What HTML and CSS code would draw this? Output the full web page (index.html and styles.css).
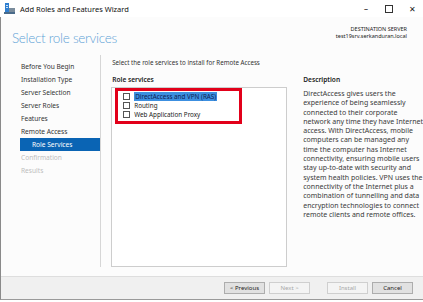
FILE: index.html
```html
<!DOCTYPE html>
<html lang="en">
<head>
    <meta charset="UTF-8">
    <title>Add Roles and Features Wizard</title>
    <link rel="stylesheet" href="styles.css">
</head>
<body>
    <div class="window">
        <div class="titlebar">
            <svg class="app-icon" width="11" height="11" viewBox="0 0 11 11">
                <rect x="1" y="0" width="4" height="9" fill="#2f7fd0"/>
                <rect x="2" y="2" width="2" height="1" fill="#cfe3f7"/>
                <rect x="2" y="4" width="2" height="1" fill="#cfe3f7"/>
                <rect x="5" y="5" width="6" height="5" fill="#7a8c9c"/>
                <rect x="0" y="9" width="11" height="2" fill="#4a6b8a"/>
            </svg>
            <span class="title-text">Add Roles and Features Wizard</span>
            <div class="controls">
                <span class="ctl">&#8211;</span>
                <span class="ctl max"></span>
                <span class="ctl">&#10005;</span>
            </div>
        </div>

        <div class="header">
            <h1>Select role services</h1>
            <div class="dest">
                <div>DESTINATION SERVER</div>
                <div>test19srv.serkanduran.local</div>
            </div>
        </div>

        <div class="main">
            <ul class="nav">
                <li>Before You Begin</li>
                <li>Installation Type</li>
                <li>Server Selection</li>
                <li>Server Roles</li>
                <li>Features</li>
                <li>Remote Access</li>
                <li class="active">Role Services</li>
                <li class="disabled">Confirmation</li>
                <li class="disabled">Results</li>
            </ul>

            <div class="content">
                <p class="intro">Select the role services to install for Remote Access</p>
                <div class="columns">
                    <div class="services">
                        <div class="col-title">Role services</div>
                        <div class="listbox">
                            <div class="mark">
                                <div class="item"><span class="box"></span><span class="sel">DirectAccess and VPN (RAS)</span></div>
                                <div class="item"><span class="box"></span><span>Routing</span></div>
                                <div class="item"><span class="box"></span><span>Web Application Proxy</span></div>
                            </div>
                        </div>
                    </div>
                    <div class="description">
                        <div class="col-title">Description</div>
                        <p>DirectAccess gives users the<br>
                        experience of being seamlessly<br>
                        connected to their corporate<br>
                        network any time they have Internet<br>
                        access. With DirectAccess, mobile<br>
                        computers can be managed any<br>
                        time the computer has Internet<br>
                        connectivity, ensuring mobile users<br>
                        stay up-to-date with security and<br>
                        system health policies. VPN uses the<br>
                        connectivity of the Internet plus a<br>
                        combination of tunnelling and data<br>
                        encryption technologies to connect<br>
                        remote clients and remote offices.</p>
                    </div>
                </div>
            </div>
        </div>

        <div class="footer">
            <button class="btn">&lt; Previous</button>
            <button class="btn" disabled>Next &gt;</button>
            <button class="btn install" disabled>Install</button>
            <button class="btn">Cancel</button>
        </div>
    </div>
</body>
</html>
```

FILE: styles.css
```css
body {
    margin: 0;
    background: #ffffff;
    font-family: "Noto Sans", "Open Sans", sans-serif;
    color: #333;
}
.window {
    width: 423px;
    height: 300px;
    box-sizing: border-box;
    border-left: 1px solid #8a8a8a;
    border-bottom: 1px solid #9a9a9a;
    background: #fcfcfc;
    display: flex;
    flex-direction: column;
}
.titlebar {
    height: 17px;
    background: #fff;
    display: flex;
    align-items: center;
    padding-left: 4px;
    margin-left: -1px;
}
.app-icon {
    margin-right: 5px;
}
.title-text {
    font-size: 7.5px;
    color: #111;
}
.controls {
    margin-left: auto;
    display: flex;
    align-items: center;
}
.ctl {
    width: 22px;
    text-align: center;
    font-size: 8px;
    color: #222;
}
.ctl.max {
    width: 6px;
    height: 6px;
    border: 1px solid #333;
    margin: 0 8px;
}
.header {
    height: 38px;
    display: flex;
    justify-content: space-between;
    align-items: flex-start;
    padding: 0 16px 0 11px;
}
.header h1 {
    margin: 13px 0 0;
    font-family: Lato, "Noto Sans", sans-serif;
    font-size: 13.5px;
    font-weight: 300;
    letter-spacing: -0.3px;
    color: #5ea2d6;
}
.dest {
    margin-top: 9px;
    text-align: right;
    font-size: 5.5px;
    line-height: 7px;
    color: #222;
}
.main {
    flex: 1;
    display: flex;
}
.nav {
    list-style: none;
    margin: 0 0 9px;
    padding: 5px 0 0;
    width: 103px;
    border-right: 1px solid #d6d6d6;
}
.nav li {
    height: 13px;
    line-height: 13px;
    padding-left: 20px;
    font-size: 6.6px;
    color: #333;
}
.nav li.active {
    margin-left: 19px;
    padding-left: 12px;
    background: #0a64b4;
    color: #fff;
}
.nav li.disabled {
    color: #bdbdbd;
}
.content {
    flex: 1;
    padding-left: 11px;
    display: flex;
    flex-direction: column;
}
.intro {
    margin: 3px 0 0;
    font-size: 6.2px;
    line-height: 9px;
}
.columns {
    flex: 1;
    display: flex;
    margin-top: 8px;
}
.services {
    width: 176px;
    display: flex;
    flex-direction: column;
    margin-left: -1px;
}
.col-title {
    font-size: 6.6px;
    font-weight: 600;
    line-height: 9px;
    color: #222;
}
.services .col-title {
    padding-left: 1px;
}
.listbox {
    height: 180px;
    margin-top: 3px;
    border: 1px solid #cdcdcd;
    background: #fff;
    box-sizing: border-box;
}
.mark {
    width: 127px;
    height: 36px;
    margin: 0 0 0 3px;
    border: 3px solid #e2001a;
    box-sizing: border-box;
    padding: 1px 0 0 5px;
}
.item {
    height: 9px;
    display: flex;
    align-items: center;
    font-size: 6.3px;
    color: #222;
}
.box {
    width: 7px;
    height: 7px;
    border: 1px solid #555;
    background: #fff;
    margin-right: 4px;
    box-sizing: border-box;
}
.sel {
    background: #3c8fe0;
    color: #0d2050;
    padding: 0 1px;
    line-height: 9px;
}
.description {
    margin-left: 16px;
    flex: 1;
}
.description p {
    margin: 5px 0 0;
    font-size: 7px;
    line-height: 9.3px;
    white-space: nowrap;
    color: #3a3a3a;
}
.footer {
    height: 22px;
    border-top: 1px solid #dedede;
    background: #f0f0f0;
    display: flex;
    align-items: center;
    justify-content: flex-end;
    padding-right: 10px;
}
.btn {
    width: 41px;
    height: 12px;
    margin-left: 4px;
    padding: 0;
    font-family: "Noto Sans", "Open Sans", sans-serif;
    font-size: 6px;
    color: #222;
    background: #e1e1e1;
    border: 1px solid #adadad;
}
.btn:disabled {
    color: #a8a8a8;
    background: #f4f4f4;
    border-color: #cfcfcf;
}
.btn.install {
    margin-left: 17px;
}
```
